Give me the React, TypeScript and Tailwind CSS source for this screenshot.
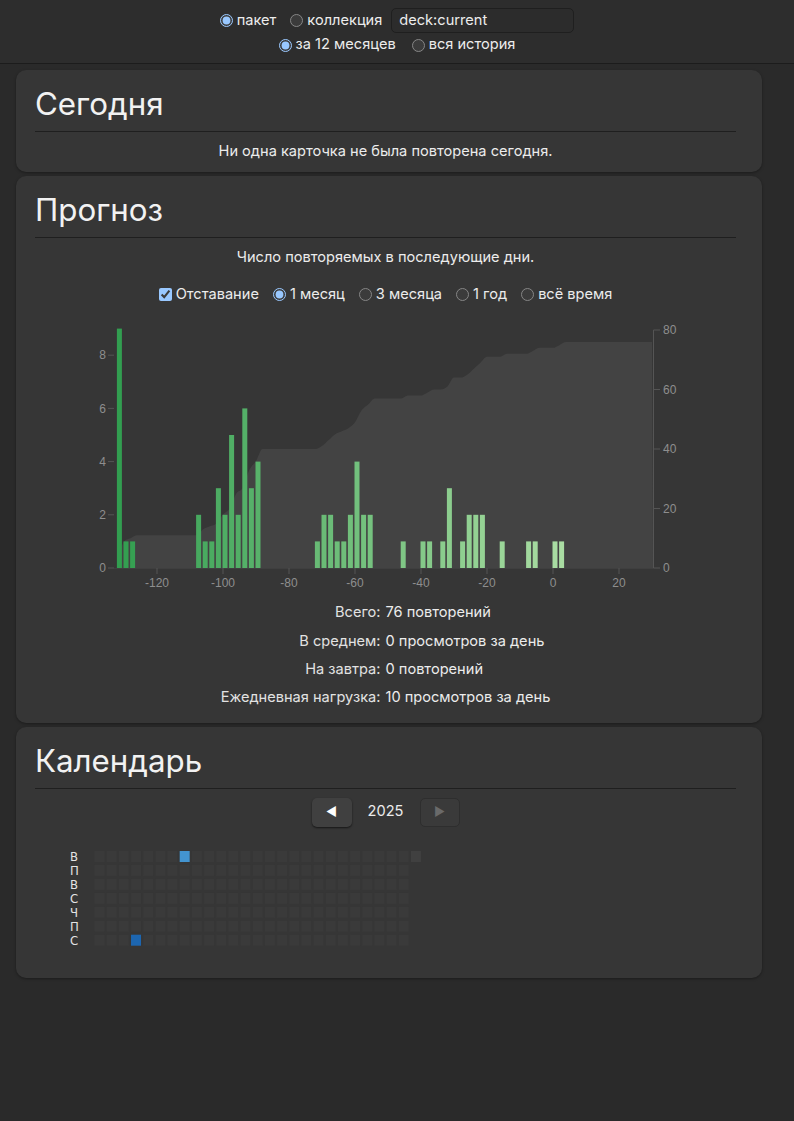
import React from 'react';

// forecast bins: [index of 2-day bin, count]
const bins: [number, number][] = [
  [0, 9], [1, 1], [2, 1], [12, 2], [13, 1], [14, 1], [15, 3], [16, 2], [17, 5], [18, 2], [19, 6], [20, 3], [21, 4],
  [30, 1], [31, 2], [32, 2], [33, 1], [34, 1], [35, 2], [36, 4], [37, 2], [38, 2],
  [43, 1], [46, 1], [47, 1], [49, 1], [50, 3], [52, 1], [53, 2], [54, 2], [55, 2], [58, 1], [62, 1], [63, 1], [66, 1], [67, 1],
];

const base = 568;
const xs = (day: number) => 553 + 3.3 * day;
const yL = (v: number) => base - v * 26.6;
const yR = (v: number) => base - v * 2.975;

function lerpColor(a: number[], b: number[], t: number) {
  const c = a.map((v, i) => Math.round(v + (b[i] - v) * t));
  return `rgb(${c[0]},${c[1]},${c[2]})`;
}

function monotonePath(pts: [number, number][]) {
  const n = pts.length;
  const h: number[] = [];
  const s: number[] = [];
  for (let i = 0; i < n - 1; i++) {
    const d = pts[i + 1][0] - pts[i][0];
    h.push(d);
    s.push((pts[i + 1][1] - pts[i][1]) / d);
  }
  const m: number[] = new Array(n).fill(0);
  for (let i = 1; i < n - 1; i++) {
    const s0 = s[i - 1], s1 = s[i];
    const p = (s0 * h[i] + s1 * h[i - 1]) / (h[i - 1] + h[i]);
    m[i] = (Math.sign(s0) + Math.sign(s1)) * Math.min(Math.abs(s0), Math.abs(s1), 0.5 * Math.abs(p)) || 0;
  }
  m[0] = (3 * s[0] - m[1]) / 2;
  m[n - 1] = (3 * s[n - 2] - m[n - 2]) / 2;
  let d = `M${pts[0][0]},${pts[0][1]}`;
  for (let i = 0; i < n - 1; i++) {
    const [x0, y0] = pts[i];
    const [x1, y1] = pts[i + 1];
    const dx = (x1 - x0) / 3;
    d += `C${x0 + dx},${y0 + m[i] * dx},${x1 - dx},${y1 - m[i + 1] * dx},${x1},${y1}`;
  }
  return d;
}

function ForecastChart() {
  const counts: Record<number, number> = {};
  bins.forEach(([k, c]) => (counts[k] = c));
  const pts: [number, number][] = [[xs(-132), base]];
  let cum = 0;
  for (let k = 0; k <= 80; k++) {
    cum += counts[k] || 0;
    pts.push([Math.min(xs(-130 + 2 * k), 653), yR(cum)]);
  }
  const top = monotonePath(pts);
  const area = `${top}L653,${base}L${xs(-132)},${base}Z`;

  return (
    <svg width={701} height={290} viewBox="35 307 701 290" className="block">
      <path d={area} fill="#434343" />
      {bins.map(([k, c]) => (
        <rect
          key={k}
          x={xs(-132 + 2 * k) - 0.5}
          y={yL(c)}
          width={5}
          height={base - yL(c)}
          fill={lerpColor([50, 158, 80], [170, 221, 163], k / 67)}
        />
      ))}
      {/* left axis */}
      {[0, 2, 4, 6, 8].map((v) => (
        <g key={v}>
          <line x1={108} x2={114} y1={yL(v)} y2={yL(v)} stroke="#555" />
          <text x={106} y={yL(v)} dy="0.35em" textAnchor="end" fontSize={12} fill="#8e8e8e" fontFamily="Liberation Sans, Arial, sans-serif">
            {v}
          </text>
        </g>
      ))}
      {/* bottom axis */}
      <line x1={114} x2={653.5} y1={base + 0.5} y2={base + 0.5} stroke="#3f3f3f" />
      {[-120, -100, -80, -60, -40, -20, 0, 20].map((v) => (
        <g key={v}>
          <line x1={xs(v)} x2={xs(v)} y1={base} y2={base + 6} stroke="#555" />
          <text x={xs(v)} y={base + 15} dy="0.35em" textAnchor="middle" fontSize={12} fill="#8e8e8e" fontFamily="Liberation Sans, Arial, sans-serif">
            {v}
          </text>
        </g>
      ))}
      {/* right axis */}
      <line x1={653.5} x2={653.5} y1={yR(80)} y2={base} stroke="#555" />
      {[0, 20, 40, 60, 80].map((v) => (
        <g key={v}>
          <line x1={653.5} x2={660} y1={yR(v)} y2={yR(v)} stroke="#555" />
          <text x={663} y={yR(v)} dy="0.35em" fontSize={12} fill="#8e8e8e" fontFamily="Liberation Sans, Arial, sans-serif">
            {v}
          </text>
        </g>
      ))}
    </svg>
  );
}

const dayLabels = ['В', 'П', 'В', 'С', 'Ч', 'П', 'С'];

function CalendarGrid() {
  const cells = [];
  for (let c = 0; c < 27; c++) {
    for (let r = 0; r < 7; r++) {
      if (c === 26 && r > 0) continue;
      let fill = '#3a3a3a';
      if (c === 26) fill = '#404040';
      if (c === 7 && r === 0) fill = '#4394d0';
      if (c === 3 && r === 6) fill = '#1d66b0';
      cells.push(
        <rect key={`${c}-${r}`} x={94.5 + 12.17 * c} y={850 + 13.95 * r} width={10} height={11} fill={fill} />
      );
    }
  }
  return (
    <svg width={701} height={130} viewBox="35 828 701 130" className="block">
      {dayLabels.map((d, r) => (
        <text
          key={r}
          x={70}
          y={850 + 13.95 * r + 5.5}
          dy="0.36em"
          fontSize={13}
          fill="#e4e4e4"
          fontFamily="DejaVu Sans Condensed, DejaVu Sans, sans-serif"
          style={{ fontStretch: 'condensed' }}
        >
          {d}
        </text>
      ))}
      {cells}
    </svg>
  );
}

function Card({ title, children }: { title: string; children: React.ReactNode }) {
  return (
    <section className="ml-4 w-[746px] rounded-[10px] bg-[#363636] pl-[19px] pr-[26px] pt-[14px] shadow-[0_1px_3px_rgba(0,0,0,0.35)]">
      <h1 className="h-[40px] text-[31.3px] leading-[40px] font-normal text-[#f2f2f2]">{title}</h1>
      <div className="mt-[7px] h-px bg-[#1f1f1f]" />
      {children}
    </section>
  );
}

function Radio({ label, checked }: { label: string; checked?: boolean }) {
  return (
    <label className="flex items-center gap-[4px]">
      <input type="radio" defaultChecked={checked} className="m-0 h-[13px] w-[13px]" />
      <span>{label}</span>
    </label>
  );
}

export default function App() {
  return (
    <div className="min-h-[1121px] bg-[#2a2a2a] text-[14.6px] text-[#ececec] [color-scheme:dark] font-[Inter,'Noto_Sans',sans-serif]">
      {/* top bar */}
      <div className="h-[64px] border-b border-[#1c1c1c] bg-[#2d2d2d] pt-[8px]">
        <div className="flex h-[25px] items-center justify-center">
          <div className="flex items-center gap-[14px]">
            <Radio label="пакет" checked />
            <Radio label="коллекция" />
          </div>
          <div className="ml-[9px] flex h-[25px] w-[183px] items-center rounded-[5px] border border-[#1f1f1f] bg-[#2c2c2c] px-[7px]">
            deck:current
          </div>
        </div>
        <div className="mt-[2px] flex h-[20px] items-center justify-center gap-[16px]">
          <Radio label="за 12 месяцев" checked />
          <Radio label="вся история" />
        </div>
      </div>

      <div className="flex flex-col gap-[4px] pt-[6px] pb-8">
        <Card title="Сегодня">
          <p className="mt-[9px] h-[20px] text-center leading-[20px]">Ни одна карточка не была повторена сегодня.</p>
          <div className="h-[11px]" />
        </Card>

        <Card title="Прогноз">
          <p className="mt-[9px] h-[20px] text-center leading-[20px]">Число повторяемых в последующие дни.</p>
          <div className="mt-[16px] flex h-[24px] items-center justify-center gap-[14px]">
            <label className="flex items-center gap-[4px]">
              <input type="checkbox" defaultChecked className="m-0 h-[13px] w-[13px]" />
              <span>Отставание</span>
            </label>
            <Radio label="1 месяц" checked />
            <Radio label="3 месяца" />
            <Radio label="1 год" />
            <Radio label="всё время" />
          </div>
          <ForecastChart />
          <div className="mt-[2px] grid grid-cols-[auto_auto] justify-center gap-x-[5px] pb-[10px]">
            {[
              ['Всего:', '76 повторений'],
              ['В среднем:', '0 просмотров за день'],
              ['На завтра:', '0 повторений'],
              ['Ежедневная нагрузка:', '10 просмотров за день'],
            ].map(([k, v]) => (
              <React.Fragment key={k}>
                <div className="flex h-[28.4px] items-center justify-end text-[#e2e2e2]">{k}</div>
                <div className="flex h-[28.4px] items-center">{v}</div>
              </React.Fragment>
            ))}
          </div>
        </Card>

        <Card title="Календарь">
          <div className="mt-[9px] flex h-[29px] items-center justify-center">
            <button className="flex h-[29px] w-[40px] items-center justify-center rounded-[5px] bg-[#404040] text-[12px] text-white shadow-[0_1px_2px_rgba(0,0,0,0.6)]">
              ◀
            </button>
            <span className="mx-[16px] w-[36px] text-center">2025</span>
            <button disabled className="flex h-[29px] w-[40px] items-center justify-center rounded-[5px] border border-[#2e2e2e] bg-[#3a3a3a] text-[12px] text-[#6a6a6a]">
              ▶
            </button>
          </div>
          <div className="mt-[2px] pb-[19px]">
            <CalendarGrid />
          </div>
        </Card>
      </div>
    </div>
  );
}
